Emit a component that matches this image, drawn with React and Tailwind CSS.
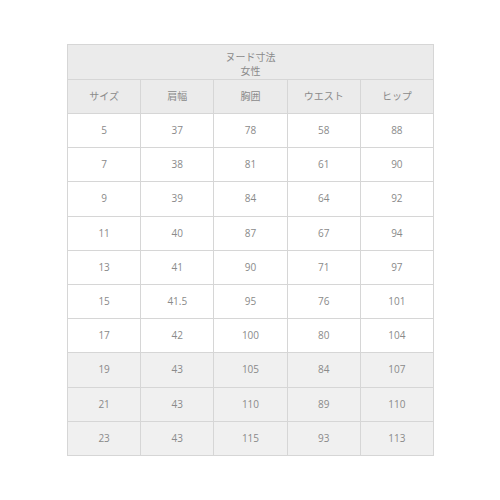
import React from "react";

const cols = ["サイズ", "肩幅", "胸囲", "ウエスト", "ヒップ"];

const rows = [
  ["5", "37", "78", "58", "88"],
  ["7", "38", "81", "61", "90"],
  ["9", "39", "84", "64", "92"],
  ["11", "40", "87", "67", "94"],
  ["13", "41", "90", "71", "97"],
  ["15", "41.5", "95", "76", "101"],
  ["17", "42", "100", "80", "104"],
  ["19", "43", "105", "84", "107"],
  ["21", "43", "110", "89", "110"],
  ["23", "43", "115", "93", "113"],
];

export default function App() {
  return (
    <div className="w-[500px] h-[500px] bg-white pt-[44px] pl-[67px]">
      <table
        className="border-collapse table-fixed w-[367px] text-[10px] text-[#8a8a8a] text-center"
        style={{ fontFamily: '"Open Sans", "Noto Sans CJK JP", sans-serif' }}
      >
        <thead>
          <tr className="bg-[#ebebeb]">
            <th colSpan={5} className="h-[35px] pt-[3px] border border-[#d6d6d6] font-normal leading-[14px]">
              <div>ヌード寸法</div>
              <div>女性</div>
            </th>
          </tr>
          <tr className="bg-[#ebebeb]">
            {cols.map((c) => (
              <th key={c} className="h-[34px] border border-[#d6d6d6] font-normal">
                {c}
              </th>
            ))}
          </tr>
        </thead>
        <tbody>
          {rows.map((r, i) => (
            <tr key={i} className={i >= 7 ? "bg-[#f0f0f0]" : "bg-white"}>
              {r.map((v, j) => (
                <td key={j} className="h-[34.2px] border border-[#d6d6d6]">
                  {v}
                </td>
              ))}
            </tr>
          ))}
        </tbody>
      </table>
    </div>
  );
}
